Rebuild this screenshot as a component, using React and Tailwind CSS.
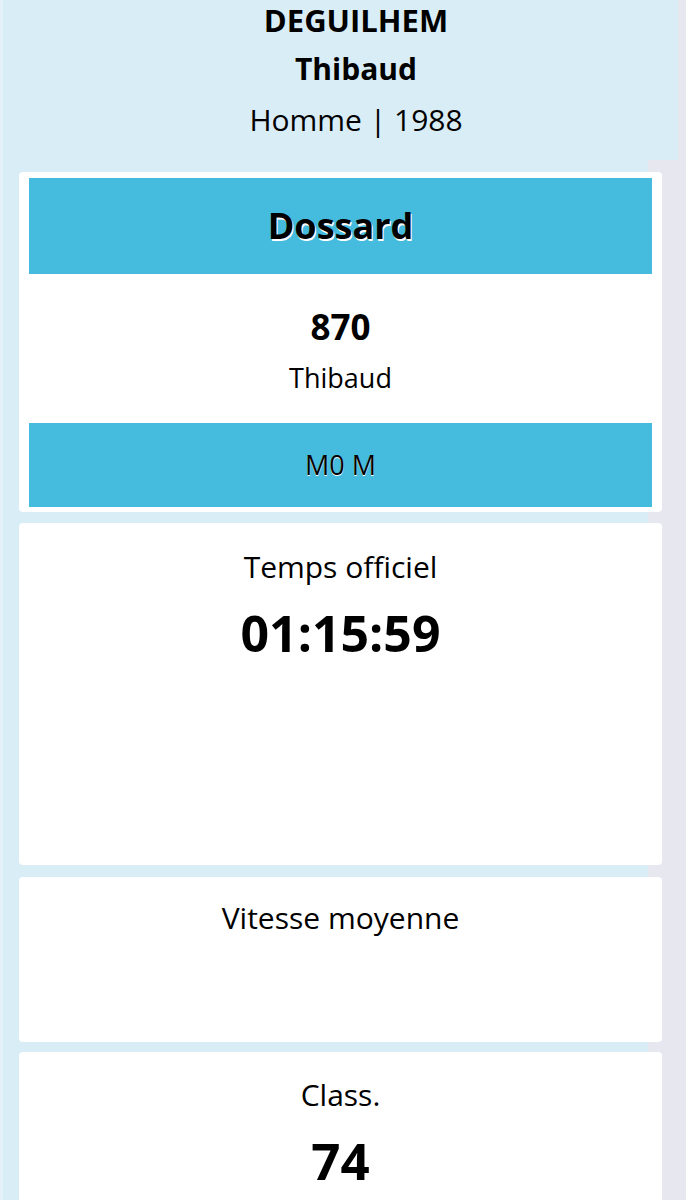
export default function App() {
  const font = { fontFamily: '"Open Sans", "Noto Sans", sans-serif' };
  return (
    <div className="min-h-screen bg-[#e7e7ef] text-black" style={font}>
      <div className="w-[648px] border-l-[3px] border-[#e4f1f8] bg-[#d9edf7] pb-10">
        <div className="-mr-[30px] flex h-[160px] flex-col items-center bg-[#d9edf7] pl-[31px]">
          <div className="text-[31px] font-bold leading-[40px]">DEGUILHEM</div>
          <div className="mt-[9px] text-[30px] font-bold leading-[40px]">Thibaud</div>
          <div className="mt-[11px] text-[30px] leading-[40px]">Homme | 1988</div>
        </div>

        <div className="ml-[16px] mt-[12px] flex w-[643px] flex-col gap-[11px]">
          <div className="rounded-[4px] bg-white px-[10px] pb-[5px] pt-[6px]">
            <div className="flex h-[96px] items-center justify-center bg-[#45bcde]">
              <span className="text-[36px] font-bold leading-[44px] [text-shadow:1px_2px_0_#ffffff]">Dossard</span>
            </div>
            <div className="mt-[31px] text-center text-[35px] font-bold leading-[44px]">870</div>
            <div className="mt-[9px] text-center text-[27px] leading-[40px]">Thibaud</div>
            <div className="mt-[25px] flex h-[84px] items-center justify-center bg-[#45bcde]">
              <span className="text-[27px] leading-[40px] [text-shadow:0_1px_0_#ffffff]">M0 M</span>
            </div>
          </div>

          <div className="h-[342px] rounded-[4px] bg-white pt-[24px] text-center">
            <div className="text-[30px] leading-[40px]">Temps officiel</div>
            <div className="mt-[16px] text-[50px] font-bold leading-[60px]">01:15:59</div>
          </div>

          <div className="mt-[1px] h-[165px] rounded-[4px] bg-white pt-[21px] text-center">
            <div className="text-[30px] leading-[40px]">Vitesse moyenne</div>
          </div>

          <div className="-mt-[1px] h-[200px] rounded-[4px] bg-white pt-[23px] text-center">
            <div className="text-[30px] leading-[40px]">Class.</div>
            <div className="mt-[15px] text-[51px] font-bold leading-[60px]">74</div>
          </div>
        </div>
      </div>
    </div>
  );
}
